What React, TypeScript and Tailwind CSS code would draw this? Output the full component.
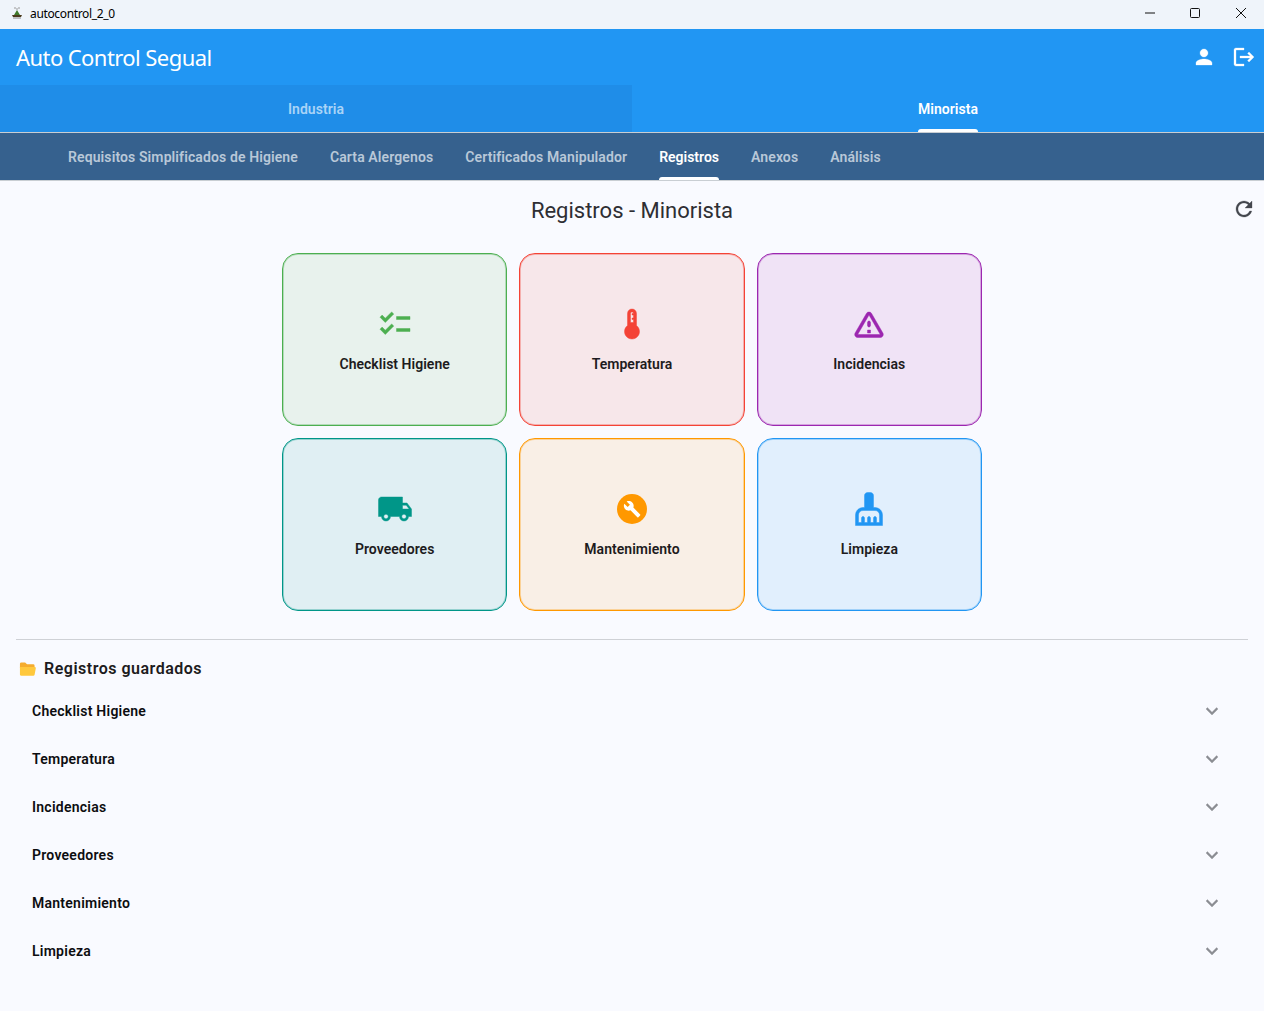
const icons = {
  checklist:
    "M22 7h-9v2h9V7zm0 8h-9v2h9v-2zM5.54 11 2 7.46l1.41-1.41 2.12 2.12 4.24-4.24 1.41 1.41L5.54 11zm0 8L2 15.46l1.41-1.41 2.12 2.12 4.24-4.24 1.41 1.41L5.54 19z",
  thermostat:
    "M15 13V5c0-1.66-1.34-3-3-3S9 3.34 9 5v8c-1.21.91-2 2.37-2 4 0 2.76 2.24 5 5 5s5-2.24 5-5c0-1.63-.79-3.09-2-4zm-4-8c0-.55.45-1 1-1s1 .45 1 1h-1v1h1v2h-1v1h1v2h-2V5z",
  warning:
    "M12 5.99 19.53 19H4.47L12 5.99M2.74 18c-.77 1.33.19 3 1.73 3h15.06c1.54 0 2.5-1.67 1.73-3L13.73 4.99c-.77-1.33-2.69-1.33-3.46 0L2.74 18zM11 11v2c0 .55.45 1 1 1s1-.45 1-1v-2c0-.55-.45-1-1-1s-1 .45-1 1zm0 5h2v2h-2z",
  shipping:
    "M20 8h-3V4H3c-1.1 0-2 .9-2 2v11h2c0 1.66 1.34 3 3 3s3-1.34 3-3h6c0 1.66 1.34 3 3 3s3-1.34 3-3h2v-5l-3-4zM6 18.5c-.83 0-1.5-.67-1.5-1.5s.67-1.5 1.5-1.5 1.5.67 1.5 1.5-.67 1.5-1.5 1.5zm13.5-9 1.96 2.5H17V9.5h2.5zm-1.5 9c-.83 0-1.5-.67-1.5-1.5s.67-1.5 1.5-1.5 1.5.67 1.5 1.5-.67 1.5-1.5 1.5z",
  cleaning:
    "M16 11h-1V3c0-1.1-.9-2-2-2h-2c-1.1 0-2 .9-2 2v8H8c-2.76 0-5 2.24-5 5v7h18v-7c0-2.76-2.24-5-5-5zm3 10h-2v-3c0-.55-.45-1-1-1s-1 .45-1 1v3h-2v-3c0-.55-.45-1-1-1s-1 .45-1 1v3H9v-3c0-.55-.45-1-1-1s-1 .45-1 1v3H5v-5c0-1.65 1.35-3 3-3h8c1.65 0 3 1.35 3 3v5z",
  person:
    "M12 12c2.21 0 4-1.79 4-4s-1.79-4-4-4-4 1.79-4 4 1.79 4 4 4zm0 2c-2.67 0-8 1.34-8 4v2h16v-2c0-2.66-5.33-4-8-4z",
  logout:
    "M17 7l-1.41 1.41L18.17 11H8v2h10.17l-2.58 2.58L17 17l5-5zM4 5h8V3H4c-1.1 0-2 .9-2 2v14c0 1.1.9 2 2 2h8v-2H4V5z",
  refresh:
    "M17.65 6.35C16.2 4.9 14.21 4 12 4c-4.42 0-7.99 3.58-7.99 8s3.57 8 7.99 8c3.73 0 6.84-2.55 7.73-6h-2.08c-.82 2.33-3.04 4-5.65 4-3.31 0-6-2.69-6-6s2.69-6 6-6c1.66 0 3.14.69 4.22 1.78L13 11h7V4l-2.35 2.35z",
  expand: "M16.59 8.59 12 13.17 7.41 8.59 6 10l6 6 6-6z",
};

const Icon = ({ d, className }: { d: string; className: string }) => (
  <svg viewBox="0 0 24 24" fill="currentColor" stroke="currentColor" strokeWidth="0.3" className={className}>
    <path d={d} />
  </svg>
);

const BuildCircle = ({ className }: { className: string }) => (
  <svg viewBox="0 0 24 24" className={className}>
    <circle cx="12" cy="12" r="10" fill="currentColor" />
    <path
      fill="#fff"
      transform="translate(6.1 6.1) scale(0.5)"
      d="M22.7 19l-9.1-9.1c.9-2.3.4-5-1.5-6.9-2-2-5-2.4-7.4-1.3L9 6 6 9 1.6 4.7C.4 7.1.9 10.1 2.9 12.1c1.9 1.9 4.6 2.4 6.9 1.5l9.1 9.1c.4.4 1 .4 1.4 0l2.3-2.3c.5-.4.5-1.1.1-1.4z"
    />
  </svg>
);

const subTabs = [
  "Requisitos Simplificados de Higiene",
  "Carta Alergenos",
  "Certificados Manipulador",
  "Registros",
  "Anexos",
  "Análisis",
];

const cards = [
  {
    label: "Checklist Higiene",
    box: "border-[#4caf50] bg-[#e8f2ed] shadow-[inset_0_0_0_1px_#4caf5055]",
    icon: <Icon d={icons.checklist} className="size-9 text-[#4caf50]" />,
  },
  {
    label: "Temperatura",
    box: "border-[#f44336] bg-[#f7e7ea] shadow-[inset_0_0_0_1px_#f4433655]",
    icon: <Icon d={icons.thermostat} className="size-9 text-[#f44336]" />,
  },
  {
    label: "Incidencias",
    box: "border-[#9c27b0] bg-[#f0e3f6] shadow-[inset_0_0_0_1px_#9c27b055]",
    icon: <Icon d={icons.warning} className="size-9 text-[#9c27b0]" />,
  },
  {
    label: "Proveedores",
    box: "border-[#009688] bg-[#e0eff3] shadow-[inset_0_0_0_1px_#00968855]",
    icon: <Icon d={icons.shipping} className="size-9 text-[#009688]" />,
  },
  {
    label: "Mantenimiento",
    box: "border-[#ff9800] bg-[#f9efe6] shadow-[inset_0_0_0_1px_#ff980055]",
    icon: <BuildCircle className="size-9 text-[#ff9800]" />,
  },
  {
    label: "Limpieza",
    box: "border-[#2196f3] bg-[#e1effd] shadow-[inset_0_0_0_1px_#2196f355]",
    icon: <Icon d={icons.cleaning} className="size-9 text-[#2196f3]" />,
  },
];

const saved = [
  "Checklist Higiene",
  "Temperatura",
  "Incidencias",
  "Proveedores",
  "Mantenimiento",
  "Limpieza",
];

const TitleBar = () => (
  <div className="flex h-[29px] items-center bg-[#eff4fa] pb-[3px] pl-[10px] font-['Noto_Sans',sans-serif] text-[12px] text-black">
    <svg viewBox="0 0 14 14" className="size-[14px]">
      <path d="M5 1v2M9 1v2M7 2v2" stroke="#999" strokeWidth="1" />
      <path d="M7 4 4 9h6z" fill="#3f7a2a" />
      <path d="M2 9h10l-1 2H3z" fill="#4a3a1c" />
      <path d="M3 12h8" stroke="#888" strokeWidth="1" />
    </svg>
    <span className="ml-[6px] mt-[1px] flex-1 tracking-[-0.35px]">autocontrol_2_0</span>
    <svg viewBox="0 0 10 10" className="mr-[35px] size-[10px]" fill="none" stroke="#111" strokeWidth="1">
      <path d="M0 5h10" />
    </svg>
    <svg viewBox="0 0 10 10" className="mr-[36px] size-[10px]" fill="none" stroke="#111" strokeWidth="1">
      <rect x="0.5" y="0.5" width="9" height="9" rx="1" />
    </svg>
    <svg viewBox="0 0 10 10" className="mr-[18px] size-[10px]" fill="none" stroke="#111" strokeWidth="1">
      <path d="M0 0l10 10M10 0 0 10" />
    </svg>
  </div>
);

export default function App() {
  return (
    <div className="flex h-screen flex-col overflow-hidden bg-[#f9faff] font-['Roboto',sans-serif]">
      <TitleBar />

      <header className="flex h-[56px] items-center bg-[#2196f3] pl-4 pr-[8px] text-white">
        <h1 className="flex-1 font-['Noto_Sans',sans-serif] text-[22px] tracking-[-0.57px]">
          Auto Control Segual
        </h1>
        <Icon d={icons.person} className="mr-[16px] size-6" />
        <Icon d={icons.logout} className="size-6" />
      </header>

      <div className="grid h-[48px] grid-cols-2 border-b border-[#c9ced3] bg-[#2196f3] text-[14px] font-semibold tracking-[0.05px]">
        <div className="flex items-center justify-center bg-[#1f8de8] pt-[1px] text-[#a9d4f7]">
          Industria
        </div>
        <div className="flex items-center justify-center text-white">
          <span className="relative flex h-full items-center pt-[1px]">
            Minorista
            <span className="absolute bottom-0 left-0 right-0 h-[3px] rounded-t-[3px] bg-white" />
          </span>
        </div>
      </div>

      <nav className="flex h-[48px] gap-8 border-b border-[#c9ced3] bg-[#36618e] pl-[68px] text-[14px] font-semibold tracking-[0.11px] text-[#b9c8d8]">
        {subTabs.map((tab) =>
          tab === "Registros" ? (
            <span key={tab} className="relative flex items-center pt-[1px] tracking-normal text-white">
              {tab}
              <span className="absolute bottom-0 left-0 right-0 h-[3px] rounded-t-[3px] bg-white" />
            </span>
          ) : (
            <span key={tab} className="flex items-center pt-[1px]">
              {tab}
            </span>
          ),
        )}
      </nav>

      <main className="flex flex-1 flex-col px-4">
        <div className="grid h-[60px] grid-cols-[1fr_auto_1fr] items-center">
          <span />
          <h2 className="mb-[1px] text-[22px] text-[#2e2e33]">Registros - Minorista</h2>
          <Icon d={icons.refresh} className="ml-auto -mr-[8px] mb-[4px] size-6 text-[#44474e]" />
        </div>

        <div className="mx-auto mt-[12px] grid w-[700px] grid-cols-3 gap-3">
          {cards.map((card) => (
            <div
              key={card.label}
              className={`flex h-[173px] flex-col items-center justify-center rounded-[16px] border pt-[1px] ${card.box}`}
            >
              <div className="flex size-9 items-center justify-center">{card.icon}</div>
              <span className="mt-[12px] text-[14px] font-semibold tracking-[0.03px] text-[#1d1b20]">
                {card.label}
              </span>
            </div>
          ))}
        </div>

        <hr className="mt-[28px] border-[#cfd1d6]" />

        <div className="mt-[18px] flex h-[22px] items-center pl-[3px]">
          <svg viewBox="0 0 18 16" className="h-[16px] w-[17px]">
            <path d="M1 2.500A1.500 1.500 0 0 1 2.500 1h4l2 2H15a1.500 1.500 0 0 1 1.500 1.500V7H1z" fill="#f5ac2e" />
            <path d="M1 6h15.500A1.200 1.200 0 0 1 17.800 7.300L16.500 14a1.500 1.500 0 0 1-1.500 1.200H2.500A1.500 1.500 0 0 1 1 14z" fill="#ffc83d" />
          </svg>
          <h3 className="ml-[8px] text-[16px] font-semibold tracking-[0.5px] text-[#1d1b20]">
            Registros guardados
          </h3>
        </div>

        <ul className="mt-[7px] flex flex-col">
          {saved.map((item) => (
            <li key={item} className="flex h-[48px] items-center justify-between pl-4 pr-6">
              <span className="text-[14px] font-semibold tracking-[0.25px] text-[#0d0d10]">{item}</span>
              <Icon d={icons.expand} className="size-6 text-[#8b8d93]" />
            </li>
          ))}
        </ul>
      </main>
    </div>
  );
}
